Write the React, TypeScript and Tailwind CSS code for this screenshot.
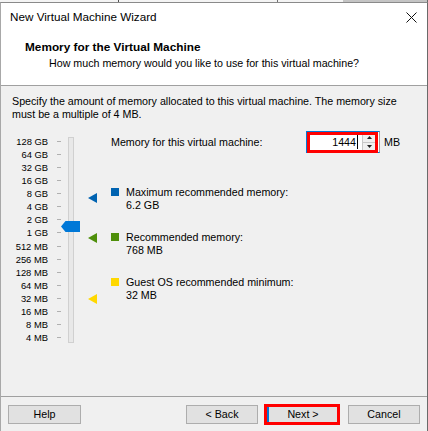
import React from "react";

const labels = [
  "128 GB", "64 GB", "32 GB", "16 GB", "8 GB", "4 GB", "2 GB", "1 GB",
  "512 MB", "256 MB", "128 MB", "64 MB", "32 MB", "16 MB", "8 MB", "4 MB",
];

function Marker({ color, top }: { color: string; top: number }) {
  return (
    <svg
      className="absolute left-[87px]"
      style={{ top }}
      width="9"
      height="10"
      viewBox="0 0 9 10"
    >
      <polygon points="0,5 9,0 9,10" fill={color} />
    </svg>
  );
}

function Legend({ color, title, value, mt }: { color: string; title: string; value: string; mt: string }) {
  return (
    <div className={`flex items-start ${mt}`}>
      <div className="w-[8px] h-[8px] mt-[2px] shrink-0" style={{ background: color }} />
      <div className="ml-[7px] flex flex-col">
        <div className="leading-[12.5px] h-[12.5px] whitespace-nowrap">{title}</div>
        <div className="leading-[12.5px] h-[12.5px] whitespace-nowrap">{value}</div>
      </div>
    </div>
  );
}

function Btn({ children, w }: { children: React.ReactNode; w: string }) {
  return (
    <div className={`${w} h-[19px] bg-[#e1e1e1] border border-[#adadad] flex items-center justify-center text-[10.7px] leading-none`}>
      {children}
    </div>
  );
}

export default function App() {
  return (
    <div className="w-[428px] h-[431px] overflow-hidden bg-white flex flex-col text-black font-['Liberation_Sans',Arial,sans-serif]">
      {/* strip of window behind */}
      <div className="h-[2px] shrink-0 flex">
        <div className="w-[118px] bg-[#f4f4f4]" />
        <div className="w-[1px] bg-[#505050]" />
        <div className="w-[158px] bg-[#f4f4f4]" />
        <div className="w-[1px] bg-[#707070]" />
        <div className="w-[65px] bg-[#f4f4f4]" />
        <div className="flex-1 bg-[#c4c4c4]" />
        <div className="w-[1px] bg-[#6a6a6a]" />
      </div>
      {/* window */}
      <div className="flex-1 flex flex-col border-t border-t-[#8a8a8a] border-l border-l-[#a8a8a8] border-r border-r-[#6a6a6a] min-h-0">
        {/* header */}
        <div className="h-[83px] shrink-0 bg-white border-b border-b-[#a0a0a0] flex flex-col">
          <div className="h-[28px] flex items-center justify-between pl-[9px] pr-[10px]">
            <span className="text-[11.7px] leading-none whitespace-nowrap">New Virtual Machine Wizard</span>
            <svg width="11" height="11" viewBox="0 0 11 11">
              <line x1="0.5" y1="0.5" x2="10.5" y2="10.5" stroke="#111" strokeWidth="1" />
              <line x1="10.5" y1="0.5" x2="0.5" y2="10.5" stroke="#111" strokeWidth="1" />
            </svg>
          </div>
          <div className="mt-[9px] pl-[24px] h-[14px] leading-[14px] text-[11.8px] font-bold whitespace-nowrap">
            Memory for the Virtual Machine
          </div>
          <div className="mt-[2px] pl-[48px] h-[14px] leading-[14px] text-[10.7px] whitespace-nowrap">
            How much memory would you like to use for this virtual machine?
          </div>
        </div>

        {/* body */}
        <div className="h-[310px] shrink-0 bg-[#f0f0f0] flex flex-col text-[10.7px]">
          <div className="pt-[8.5px] pl-[11px] leading-[13px]">
            <div className="whitespace-nowrap">Specify the amount of memory allocated to this virtual machine. The memory size</div>
            <div className="whitespace-nowrap">must be a multiple of 4 MB.</div>
          </div>

          <div className="mt-[9.5px] flex">
            {/* slider */}
            <div className="relative w-[110px] h-[220px] shrink-0 flex">
              <div className="w-[47px] pt-[4.5px] flex flex-col items-end text-[9.4px]">
                {labels.map((l) => (
                  <div key={l} className="h-[13.13px] leading-[13.13px] whitespace-nowrap">{l}</div>
                ))}
              </div>
              <div className="ml-[9px] w-[4px] pt-[4.5px] flex flex-col">
                {labels.map((l) => (
                  <div key={l} className="h-[13.13px] flex items-center">
                    <div className="w-[4px] h-[1px] bg-[#b0b0b0]" />
                  </div>
                ))}
              </div>
              <div className="ml-[7px] mt-[7px] w-[6px] h-[206px] border border-[#d0d0d0] bg-[#e8e8e8]" />
              <svg className="absolute left-[60px] top-[91px]" width="19" height="11" viewBox="0 0 19 11">
                <polygon points="0,5.5 4.5,0 19,0 19,11 4.5,11" fill="#0078d7" />
              </svg>
              <Marker color="#0063b1" top={63} />
              <Marker color="#4e8f0a" top={103} />
              <Marker color="#ffd800" top={164} />
            </div>

            {/* right column */}
            <div className="flex-1 flex flex-col">
              <div className="mt-[1px] h-[22px] flex items-center">
                <div className="w-[195px] whitespace-nowrap">Memory for this virtual machine:</div>
                <div className="relative w-[74px] h-[22px] flex bg-white border border-[#0078d7] border-r-[#a0a0a0]">
                  <div className="flex-1 flex items-center justify-end pr-[4px]">
                    <span className="leading-none text-[10.7px]">1444</span>
                    <span className="ml-[1px] w-[1px] h-[14px] bg-black" />
                  </div>
                  <div className="w-[13px] flex flex-col border-l border-[#c8c8c8] my-[1px]">
                    <div className="flex-1 bg-[#f0f0f0] border-b border-[#c8c8c8] flex items-center justify-center">
                      <svg width="5" height="3" viewBox="0 0 5 3"><polygon points="2.5,0 5,3 0,3" fill="#222" /></svg>
                    </div>
                    <div className="flex-1 bg-[#f0f0f0] flex items-center justify-center">
                      <svg width="5" height="3" viewBox="0 0 5 3"><polygon points="0,0 5,0 2.5,3" fill="#222" /></svg>
                    </div>
                  </div>
                  <div className="w-[4px]" />
                  <div className="absolute left-[0px] top-[0px] w-[71px] h-[21px] border-[3px] border-[#ff0000]" />
                </div>
                <div className="ml-[4px] whitespace-nowrap">MB</div>
              </div>
              <Legend color="#0063b1" title="Maximum recommended memory:" value="6.2 GB" mt="mt-[33px]" />
              <Legend color="#4e8f0a" title="Recommended memory:" value="768 MB" mt="mt-[20px]" />
              <Legend color="#ffd800" title="Guest OS recommended minimum:" value="32 MB" mt="mt-[20px]" />
            </div>
          </div>
        </div>

        {/* separator */}
        <div className="h-[1px] shrink-0 bg-[#a0a0a0]" />

        {/* buttons */}
        <div className="flex-1 bg-[#f0f0f0] flex items-center pl-[7px] pr-[7px]">
          <Btn w="w-[73px]">Help</Btn>
          <div className="flex-1" />
          <Btn w="w-[72px]">&lt; Back</Btn>
          <div className="ml-[6px] w-[76px] h-[21px] border-[3px] border-[#ff0000] flex">
            <div className="flex-1 bg-[#e1e1e1] border-l-2 border-[#0078d7] flex items-center justify-center text-[10.7px] leading-none">
              Next &gt;
            </div>
          </div>
          <div className="ml-[8px]">
            <Btn w="w-[72px]">Cancel</Btn>
          </div>
        </div>
      </div>
    </div>
  );
}
